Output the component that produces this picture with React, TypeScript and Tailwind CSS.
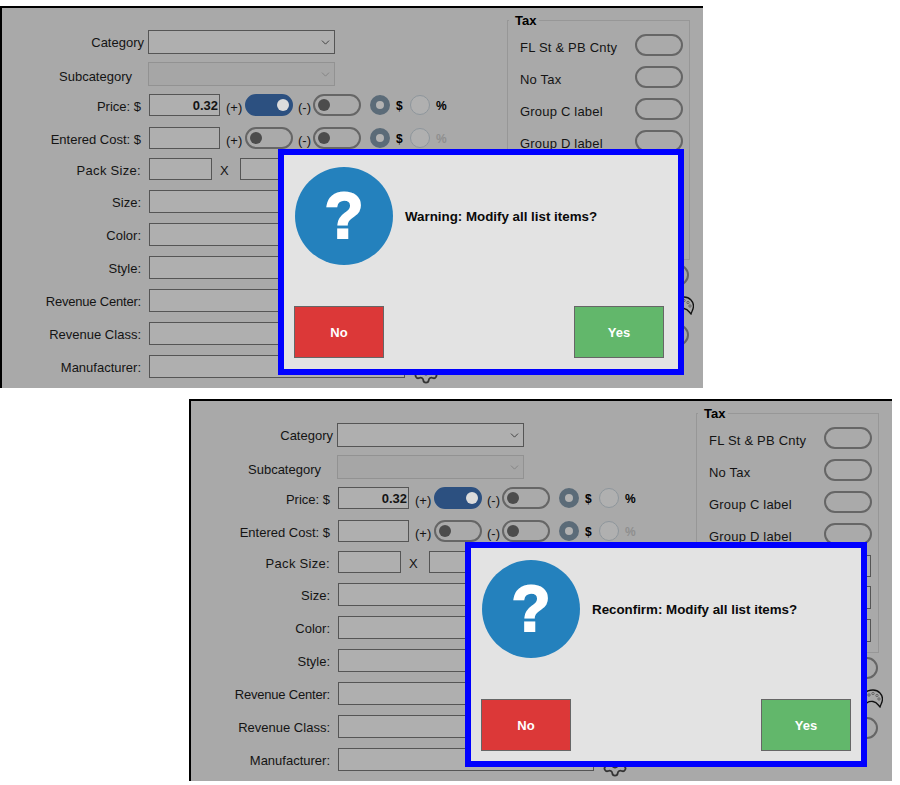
import type { ReactNode } from 'react';
import { ChevronDown, Settings } from 'lucide-react';

const font = 'font-["Liberation_Sans",Arial,sans-serif]';

function Toggle({ on = false, blank = false }: { on?: boolean; blank?: boolean }) {
  return (
    <div
      className={`flex h-[22px] w-[48px] shrink-0 items-center rounded-full border-2 ${
        on ? 'justify-end border-[#2c5080] bg-[#2c5080] pr-[2px]' : 'border-[#666666] bg-[#aaaaaa] pl-[3px]'
      }`}
    >
      {on ? <div className="h-[12px] w-[12px] rounded-full bg-[#dcdcdc]" /> : null}
      {!on && !blank ? <div className="h-[12px] w-[12px] rounded-full bg-[#4c4c4c]" /> : null}
    </div>
  );
}

function Radio({ on = false }: { on?: boolean }) {
  return on ? (
    <div className="h-[20px] w-[20px] shrink-0 rounded-full border-[6px] border-[#5b6b78] bg-[#b2b2b2]" />
  ) : (
    <div className="h-[20px] w-[20px] shrink-0 rounded-full border border-[#8e969c] bg-[#b0b0b0]" />
  );
}

function Field({ className = '' }: { className?: string }) {
  return <div className={`shrink-0 border border-[#555555] bg-[#afafaf] ${className}`} />;
}

function Label({ text, className = 'mr-[8px] mt-[2px] w-[139px]' }: { text: string; className?: string }) {
  return <div className={`shrink-0 whitespace-nowrap text-right text-[13px] text-[#141414] ${className}`}>{text}</div>;
}

function AdjustRow({ on = false, percentFaded = false }: { on?: boolean; percentFaded?: boolean }) {
  return (
    <>
      <div className="ml-[6px] mt-[5px] w-[19px] whitespace-nowrap text-[13px] text-[#141414]">(+)</div>
      <Toggle on={on} />
      <div className="ml-[5px] mt-[5px] w-[15px] whitespace-nowrap text-[13px] text-[#141414]">(-)</div>
      <Toggle />
      <div className="ml-[9px]">
        <Radio on />
      </div>
      <div className="ml-[6px] mt-[2px] w-[8px] text-[12px] font-bold text-black">$</div>
      <div className="ml-[6px]">
        <Radio />
      </div>
      <div className={`ml-[6px] mt-[2px] text-[12px] font-bold ${percentFaded ? 'text-[#8f8f8f]' : 'text-black'}`}>%</div>
    </>
  );
}

function TextRow({ label, labelClassName }: { label: string; labelClassName?: string }) {
  return (
    <div className="mt-[10px] flex h-[23px] items-center">
      <Label text={label} className={labelClassName} />
      <Field className="h-[23px] w-[256px]" />
    </div>
  );
}

function TaxRow({ label }: { label: string }) {
  return (
    <div className="flex h-[22px] items-center justify-between pl-[12px] pr-[6px]">
      <span className="mt-[6px] text-[13px] tracking-[0.2px] text-[#141414]">{label}</span>
      <Toggle blank />
    </div>
  );
}

function Palette() {
  return (
    <svg width="24" height="19" viewBox="0 0 24 19" fill="none" className="mr-[-5px]">
      <path
        d="M1 14 C1 6 7 1 14 1 C20 1 23.5 6 23.5 10 C23.5 13 22 15 21 18 C19 16 18 13 14 12.5 C10 12 7 14 6 17 C3 17 1 16 1 14 Z"
        stroke="#111111"
        strokeWidth="1.3"
      />
      <circle cx="10" cy="6" r="1.2" stroke="#555555" strokeWidth="0.8" />
      <circle cx="14" cy="4.5" r="1.2" stroke="#555555" strokeWidth="0.8" />
      <circle cx="18" cy="6.5" r="1.2" stroke="#555555" strokeWidth="0.8" />
      <circle cx="20" cy="10" r="1.2" stroke="#555555" strokeWidth="0.8" />
    </svg>
  );
}

function Dialog({
  message,
  className,
  buttonsClassName,
}: {
  message: string;
  className: string;
  buttonsClassName: string;
}) {
  return (
    <div className={`absolute flex flex-col justify-between border-[6px] border-[#0000ff] bg-[#e3e3e3] ${className}`}>
      <div className="flex items-center gap-[12px] pl-[11px] pt-[12px]">
        <div className="flex h-[98px] w-[98px] items-center justify-center rounded-full bg-[#2481bd]">
          <span className="text-[64px] font-bold leading-none text-white [-webkit-text-stroke:2px_white]">?</span>
        </div>
        <span className="mt-[2px] text-[13.33px] font-bold text-[#0a0a0a]">{message}</span>
      </div>
      <div className={`flex justify-between ${buttonsClassName}`}>
        <div className="flex h-[52px] w-[90px] items-center justify-center border border-[#666666] bg-[#dc3838] pt-[2px] text-[13px] font-bold text-white">
          No
        </div>
        <div className="flex h-[52px] w-[90px] items-center justify-center border border-[#666666] bg-[#62b76b] pt-[2px] text-[13px] font-bold text-white">
          Yes
        </div>
      </div>
    </div>
  );
}

function Panel({ children, className = '' }: { children: ReactNode; className?: string }) {
  return (
    <div className={`relative flex h-[382px] w-[703px] overflow-hidden border-l-2 border-t-2 border-black bg-[#a9a9a9] ${className}`}>
      <div className="w-[505px] shrink-0 pt-[22px]">
        <div className="flex h-[24px] items-center">
          <Label text="Category" className="mr-[4px] mt-[2px] w-[142px]" />
          <div className="flex h-[24px] w-[187px] items-center justify-end border border-[#555555] bg-[#afafaf] pr-[2px]">
            <ChevronDown size={13} strokeWidth={1.6} className="text-[#333333]" />
          </div>
        </div>
        <div className="mt-[8px] flex h-[24px] items-center">
          <Label text="Subcategory" className="mr-[16px] mt-[6px] w-[130px]" />
          <div className="flex h-[24px] w-[187px] items-center justify-end border border-[#929292] bg-[#a6a6a6] pr-[2px]">
            <ChevronDown size={13} strokeWidth={1.6} className="text-[#808080]" />
          </div>
        </div>
        <div className="mt-[8px] flex h-[22px] items-center">
          <Label text="Price: $" className="mr-[8px] mt-[4px] w-[139px]" />
          <div className="flex h-[22px] w-[71px] shrink-0 items-center justify-end border border-[#555555] bg-[#afafaf] pr-[1px] pt-[2px] text-[13px] font-bold text-[#141414]">
            0.32
          </div>
          <AdjustRow on />
        </div>
        <div className="mt-[11px] flex h-[22px] items-center">
          <Label text="Entered Cost: $" className="mr-[8px] mt-[4px] w-[139px]" />
          <Field className="h-[22px] w-[71px]" />
          <AdjustRow percentFaded />
        </div>
        <div className="mt-[9px] flex h-[22px] items-center">
          <Label text="Pack Size:" className="mr-[8px] mt-[4px] w-[139px] tracking-[0.3px]" />
          <Field className="h-[22px] w-[63px]" />
          <div className="ml-[8px] mt-[4px] w-[20px] text-[13px] text-[#141414]">X</div>
          <Field className="h-[22px] w-[63px]" />
        </div>
        <TextRow label="Size:" />
        <TextRow label="Color:" />
        <TextRow label="Style:" />
        <TextRow label="Revenue Center:" labelClassName="mr-[8px] mt-[2px] w-[139px] tracking-[-0.2px]" />
        <TextRow label="Revenue Class:" />
        <div className="mt-[10px] flex h-[23px] items-center">
          <Label text="Manufacturer:" />
          <Field className="h-[23px] w-[256px]" />
          <Settings size={28} strokeWidth={1.5} className="ml-[7px] mt-[9px] shrink-0 text-[#333333]" />
        </div>
      </div>
      <div className="w-[190px] shrink-0 pt-[5px]">
        <fieldset className="h-[247px] w-[183px] border border-[#979797]">
          <legend className="ml-[1px] pl-[6px] pr-[3px] text-[13px] font-bold leading-[15px] text-black">Tax</legend>
          <div className="flex flex-col gap-[10px] pt-[6px]">
            <TaxRow label="FL St & PB Cnty" />
            <TaxRow label="No Tax" />
            <TaxRow label="Group C label" />
            <TaxRow label="Group D label" />
            <div className="flex justify-end pr-[7px]">
              <Field className="h-[22px] w-[80px]" />
            </div>
            <div className="-mt-[1px] flex justify-end pr-[7px]">
              <Field className="h-[23px] w-[80px]" />
            </div>
            <div className="flex justify-end pr-[7px]">
              <Field className="h-[23px] w-[80px]" />
            </div>
          </div>
        </fieldset>
        <div className="flex w-[182px] flex-col items-end pt-[4px]">
          <Toggle blank />
          <div className="mt-[10px]">
            <Palette />
          </div>
          <div className="mt-[9px]">
            <Toggle blank />
          </div>
        </div>
      </div>
      {children}
    </div>
  );
}

export default function App() {
  return (
    <div className={`min-h-[785px] bg-white pt-[6px] ${font}`}>
      <Panel>
        <Dialog
          message="Warning: Modify all list items?"
          className="left-[276px] top-[141px] h-[226px] w-[406px]"
          buttonsClassName="pb-[11px] pl-[10px] pr-[14px]"
        />
      </Panel>
      <Panel className="ml-[189px] mt-[11px]">
        <Dialog
          message="Reconfirm: Modify all list items?"
          className="left-[274px] top-[141px] h-[225px] w-[402px]"
          buttonsClassName="px-[10px] pb-[10px]"
        />
      </Panel>
    </div>
  );
}
